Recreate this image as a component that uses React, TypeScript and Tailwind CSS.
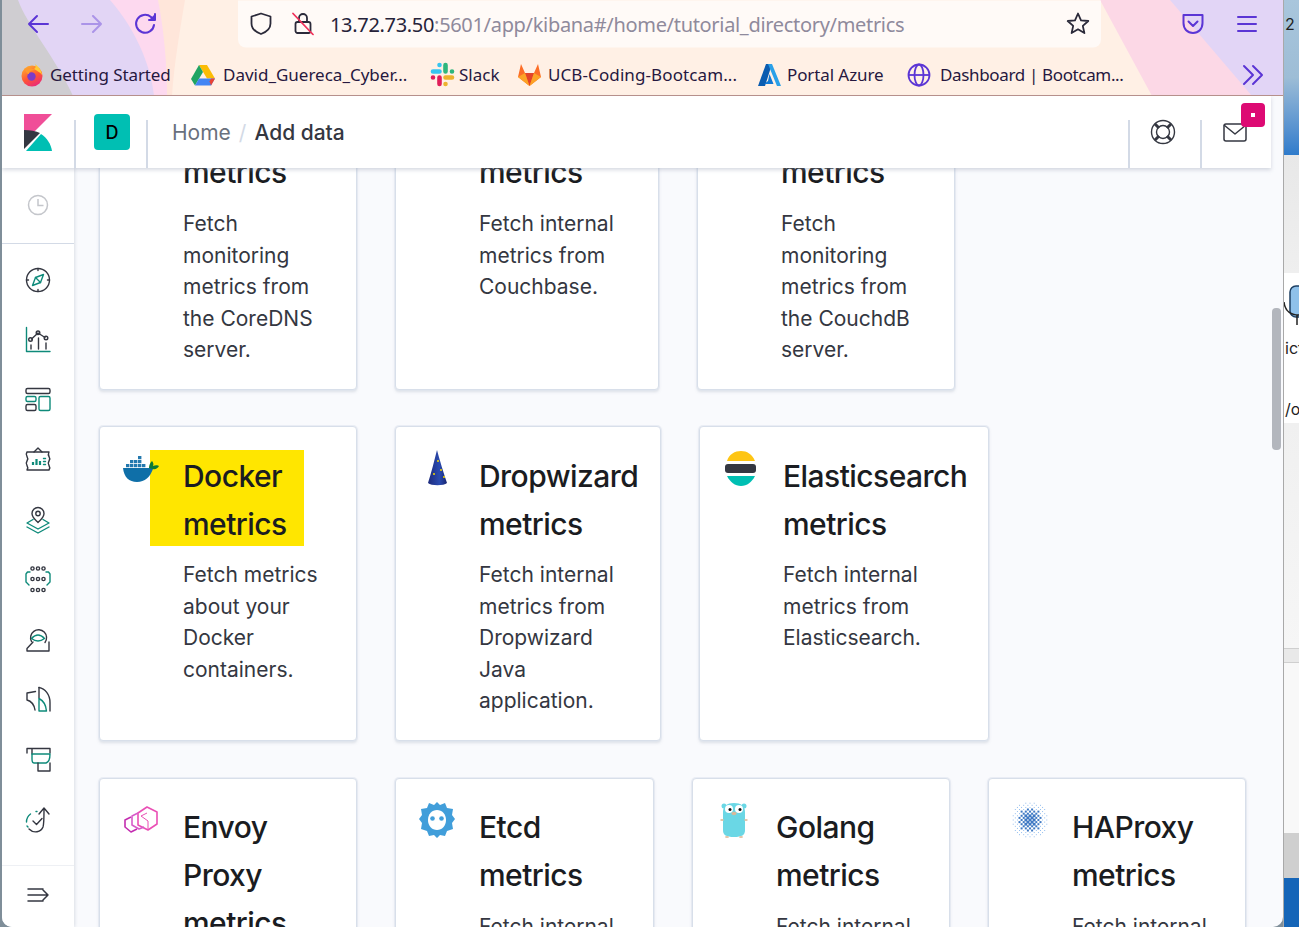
import React from "react";

const D = "#343741";
const T = "#0e8a7a";
const P = "#5b35d5";

function I({ children }: { children: React.ReactNode }) {
  return (
    <svg width="32" height="32" viewBox="0 0 32 32" fill="none" stroke={D} strokeWidth="1.4" strokeLinecap="round" strokeLinejoin="round">
      {children}
    </svg>
  );
}

const navIcons: React.ReactNode[] = [
  <I key="a">
    <circle cx="16" cy="16" r="11.5" />
    <path d="M16 4.5v2M16 25.5v2M4.5 16h2M25.5 16h2" />
    <path d="M21.5 10.5 18.5 18.5 10.5 21.5 13.5 13.5Z" stroke={T} />
    <path d="M13.5 13.5 18.5 18.5" stroke={T} />
  </I>,
  <I key="b">
    <path d="M4.5 3.5V27.5H28" stroke={T} />
    <path d="M9.5 15 16 9 23 13.5" />
    <circle cx="8.5" cy="15.5" r="1.8" />
    <circle cx="16" cy="8.8" r="1.8" />
    <circle cx="24" cy="14" r="1.8" />
    <path d="M9 21v4M16.500 14v11M24 19v6" />
  </I>,
  <I key="c">
    <rect x="4" y="4.500" width="24" height="5" rx="1.5" />
    <rect x="4" y="12.500" width="10" height="5" rx="1.5" stroke={T} />
    <rect x="4" y="20.500" width="10" height="6" rx="1.500" />
    <rect x="17" y="12.500" width="11" height="14" rx="1.500" stroke={T} />
  </I>,
  <I key="d">
    <path d="M12 8l4-4 4 4" />
    <path d="M5 8h22v0c-1 2-1 3 0 4.500s1 3 0 4.500-1 3 0 4.500 1 3 0 4.500H5c1-1.500 1-3 0-4.500s-1-3 0-4.500 1-3 0-4.500-1-3 0-4.500Z" />
    <path d="M11 21v-3M14.500 21v-6M18 21v-4" stroke={T} strokeWidth="2.200" strokeLinecap="butt" />
    <path d="M21.500 14.500h2M21.500 17.500h2M21.500 20.500h2" stroke={T} />
  </I>,
  <I key="e">
    <path d="M16 18.500c-3-3-6-5-6-9a6 6 0 0 1 12 0c0 4-3 6-6 9Z" />
    <circle cx="16" cy="9.500" r="2.200" />
    <path d="M11 15.500 5 19l11 6 11-6-6-3.500" stroke={T} />
    <path d="M5 23l11 6 11-6" stroke={T} />
  </I>,
  <I key="f">
    {[[10.5, 4.5], [16, 4.5], [21.5, 4.5], [10.5, 15], [16, 15], [21.5, 15], [10.5, 26], [16, 26], [21.5, 26]].map(([x, y], i) => (
      <circle key={i} cx={x} cy={y} r="1.600" />
    ))}
    <path d="M8 8H5.500L4 10v8l3 3" stroke={T} />
    <path d="M24 8h2.500l1.500 2v8l-3 3" stroke={T} />
  </I>,
  <I key="g">
    <path d="M9.500 17.500a8 8 0 1 1 13.500 1" />
    <path d="M9.500 14.500q6.500-7 13 0-6.500 5-13 0Z" stroke={T} />
    <path d="M11 18 5 24.500V27h22V18" />
  </I>,
  <I key="h">
    <path d="M13.500 7.500 5 9v7c4 1 7 4 8 10" />
    <path d="M17 3.500c6 1 11 7 11 15V27" />
    <path d="M17 3.500V14" />
    <path d="M17 14.500c4 2 7 7 7.500 12.500H17Z" stroke={T} />
  </I>,
  <I key="i">
    <path d="M5 9V4.500h23V9M10 4.500V10" />
    <path d="M10 10h18c0 5-1 8-4 9H12c-2 0-2-2-2-4Z" stroke={T} />
    <path d="M16 19v8h12v-8" />
  </I>,
  <I key="j">
    <path d="M4.500 18a10 10 0 0 1 4-8M14 7.500h1M5 22l1 1" stroke={T} />
    <path d="M7 25c5 5 12 3 14-2 1-3 1-9 1-17M17 10l5-6 5 6" />
    <path d="M11 17l3.500 3.500 5.500-6" />
  </I>,
];

function Firefox() {
  return (
    <svg width="24" height="24" viewBox="0 0 24 24">
      <defs>
        <linearGradient id="ff" x1="0.2" y1="0" x2="0.7" y2="1">
          <stop offset="0" stopColor="#ffb02e" />
          <stop offset=".55" stopColor="#ff5634" />
          <stop offset="1" stopColor="#e8287e" />
        </linearGradient>
      </defs>
      <circle cx="12" cy="13" r="10.500" fill="url(#ff)" />
      <path d="M15 1c4 3 7 7 7 11-2-3-5-4-8-6 2-1 2-3 1-5Z" fill="#ffcb35" />
      <circle cx="11.500" cy="13.500" r="4.200" fill="#7a3cc9" />
      <path d="M5 7c3-2 7-2 10 0 -3 0-6 1-6 4-2 0-3-2-4-4Z" fill="#ff9a2e" />
    </svg>
  );
}
function Drive() {
  return (
    <svg width="24" height="22" viewBox="0 0 24 22">
      <path d="M8 1h8l8 13.500h-8Z" fill="#fbbc04" />
      <path d="M8 1 0 15l4 6.500L12 8Z" fill="#1fa463" />
      <path d="M8 14.500h16L20 21.500H4Z" fill="#4285f4" />
      <path d="M24 14.500h-4l-1.500 3L20 21.500Z" fill="#ea4335" />
    </svg>
  );
}
function Slack() {
  return (
    <svg width="25" height="25" viewBox="0 0 25 25" fill="none" strokeWidth="4.600" strokeLinecap="round">
      <path d="M9.500 3v0M3 9.500h6.500" stroke="#36c5f0" />
      <path d="M22 9.500h0M15.500 3v6.500" stroke="#2eb67d" />
      <path d="M15.500 22h0M22 15.500h-6.500" stroke="#ecb22e" />
      <path d="M3 15.500h0M9.500 22v-6.500" stroke="#e01e5a" />
    </svg>
  );
}
function GitLab() {
  return (
    <svg width="25" height="24" viewBox="0 0 25 24">
      <path d="M12.500 23 1 14l3-13 4 9h9l4-9 3 13Z" fill="#fc6d26" />
      <path d="M12.500 23 8 10h9Z" fill="#e24329" />
      <path d="M12.500 23 1 14l7-4ZM12.500 23 24 14l-7-4Z" fill="#fca326" />
    </svg>
  );
}
function Azure() {
  return (
    <svg width="23" height="24" viewBox="0 0 23 24">
      <path d="M8 1h6L7 23H0Z" fill="#0a5cb0" />
      <path d="M14 1h-4l9 22h4Z" fill="#2aa0e8" />
      <path d="M11.500 11l4 10H6l4-3Z" fill="#0f78d4" />
    </svg>
  );
}
function Globe() {
  return (
    <svg width="24" height="24" viewBox="0 0 24 24" fill="none" stroke={P} strokeWidth="1.800">
      <circle cx="12" cy="12" r="10.500" />
      <ellipse cx="12" cy="12" rx="4.500" ry="10.500" />
      <path d="M1.500 12h21" />
    </svg>
  );
}

function Docker() {
  return (
    <svg width="36" height="36" viewBox="0 0 36 36">
      <path d="M0 18h26c1 0 2-1 3-2 1 1 1 2 1 3-3 8-8 13-16 13C6 32 1 27 0 18Z" fill="#0f6fa8" />
      <path d="M26 18c0-3 1-5 3-7 1 1 2 3 1 5 2-1 5-1 6 0-1 2-4 4-6 3Z" fill="#0f7a34" />
      {[[3, 14], [7, 14], [11, 14], [15, 14], [19, 14], [7, 10], [11, 10], [15, 10], [15, 6]].map(([x, y], i) => (
        <rect key={i} x={x} y={y} width="3.400" height="3.200" fill="#2378ae" />
      ))}
    </svg>
  );
}
function Dropwizard() {
  return (
    <svg width="36" height="36" viewBox="0 0 36 36">
      <defs>
        <linearGradient id="dw" x1="0" x2="1" y1="0" y2="0">
          <stop offset="0" stopColor="#1d2a7c" />
          <stop offset=".6" stopColor="#2a4bb0" />
          <stop offset="1" stopColor="#172470" />
        </linearGradient>
      </defs>
      <path d="M18 0c2 8 7 24 10 33-3 3-16 3-19 0C12 24 16 8 18 0Z" fill="url(#dw)" />
      <circle cx="19" cy="11" r="1" fill="#f5d800" />
      <circle cx="22" cy="20" r="1" fill="#f5d800" />
      <circle cx="15" cy="24" r="1" fill="#f5d800" />
      <circle cx="25" cy="27" r="1" fill="#f5d800" />
    </svg>
  );
}
function Elastic() {
  return (
    <svg width="36" height="36" viewBox="0 0 36 36">
      <path d="M4 11C6 4 12 1 18 1s11 3 14 10Z" fill="#fec514" />
      <rect x="2" y="14" width="31" height="9" rx="3" fill={D} />
      <path d="M4 26h28c-3 6-8 10-14 10S7 32 4 26Z" fill="#00bfb3" />
    </svg>
  );
}
function Envoy() {
  return (
    <svg width="36" height="36" viewBox="0 0 36 36" fill="none" strokeWidth="1.600" strokeLinejoin="round">
      <path d="M24 5l10 5v12l-9 6-10-5V11Z" stroke="#ea4fb5" />
      <path d="M24 11l-6 3 7 5v8" stroke="#ea4fb5" strokeWidth="1" />
      <path d="M15 11l-6 3v9l7 4 5-2" stroke="#d75bc9" />
      <path d="M8 15l-6 3v7l6 5 6-3" stroke="#c32db0" />
    </svg>
  );
}
function Etcd() {
  return (
    <svg width="36" height="36" viewBox="0 0 36 36">
      <path d="M18 0l3 3 5-2 2 5 6 1-1 6 3 4-3 4 1 6-6 2-2 5-5-1-3 3-3-3-5 1-2-5-6-2 1-6-3-4 3-4-1-6 6-1 2-5 5 2Z" fill="#419eda" />
      <path d="M18 8c5 0 9 4 9 10 0 6-4 10-9 10S9 24 9 18 13 8 18 8Z" fill="#fff" />
      <circle cx="13.500" cy="16.500" r="2.300" fill="#419eda" />
      <circle cx="22.500" cy="16.500" r="2.300" fill="#419eda" />
    </svg>
  );
}
function Gopher() {
  return (
    <svg width="36" height="36" viewBox="0 0 36 36">
      <circle cx="8" cy="4" r="2.500" fill="#6ad7e5" />
      <circle cx="28" cy="4" r="2.500" fill="#6ad7e5" />
      <path d="M18 1c7 0 11 3 11 9v18c0 5-3 7-11 7S7 33 7 28V10C7 4 11 1 18 1Z" fill="#6ad7e5" />
      <circle cx="13" cy="7" r="4" fill="#fff" />
      <circle cx="23" cy="7" r="4" fill="#fff" />
      <circle cx="14" cy="7.500" r="1.500" fill="#111" />
      <circle cx="24" cy="7.500" r="1.500" fill="#111" />
      <ellipse cx="18" cy="11.500" rx="2.500" ry="1.800" fill="#d8b89a" />
      <ellipse cx="6" cy="18" rx="1.800" ry="1" fill="#e0c3a5" />
      <ellipse cx="30" cy="18" rx="1.800" ry="1" fill="#e0c3a5" />
      <ellipse cx="11" cy="35" rx="2" ry="1" fill="#e0c3a5" />
      <ellipse cx="25" cy="35" rx="2" ry="1" fill="#e0c3a5" />
    </svg>
  );
}
function HAProxy() {
  const cells: React.ReactNode[] = [];
  for (let y = -8; y <= 8; y++) {
    for (let x = -8; x <= 8; x++) {
      const d = Math.hypot(x, y);
      if (d > 8.700 || (x + y) % 2 !== 0) continue;
      const s = d < 3 ? 2.800 : d < 5.700 ? 2 : 0.900;
      cells.push(
        <rect key={x + "_" + y} x={18 + x * 2.100 - s / 2} y={18 + y * 2.100 - s / 2} width={s} height={s} fill={d < 5.700 ? "#3f79c4" : "#7cb0ea"} />
      );
    }
  }
  return <svg width="36" height="36" viewBox="0 0 36 36">{cells}</svg>;
}

type Card = { w: string; title: string[]; desc: string[]; icon?: React.ReactNode; hl?: boolean };

function CardView({ c, first }: { c: Card; first: boolean }) {
  return (
    <div className={`${c.w} flex-none flex rounded-[4px] border border-[#d8dfea] bg-white pl-[23px] pt-[23px] pb-[23px] shadow-[0_0_0_1px_rgba(225,230,240,0.6),0_2px_3px_rgba(152,162,179,0.3)]`}>
      <div className="relative z-10 h-9 w-9 flex-none">{c.icon}</div>
      <div className="ml-6 pt-[2px]">
        <div
          className={
            c.hl
              ? "-mt-[2px] -ml-[33px] mb-[13px] h-[96px] w-[154px] bg-[#ffe600] pl-[33px] pt-[1.500px]"
              : first
                ? "mb-[12px]"
                : "-mt-[0.5px] mb-[11.5px]"
          }
        >
          {c.title.map((t) => (
            <div key={t} className="whitespace-nowrap text-[30px] font-[450] leading-[48px] tracking-[-0.55px] text-[#1a1c21]">{t}</div>
          ))}
        </div>
        {c.desc.map((t) => (
          <div key={t} className="whitespace-nowrap text-[21px] leading-[31.5px] text-[#343741]">{t}</div>
        ))}
      </div>
    </div>
  );
}

const rows: Card[][] = [
  [
    { w: "w-[258px]", title: ["CoreDNS", "metrics"], desc: ["Fetch", "monitoring", "metrics from", "the CoreDNS", "server."] },
    { w: "w-[264px]", title: ["Couchbase", "metrics"], desc: ["Fetch internal", "metrics from", "Couchbase."] },
    { w: "w-[258px]", title: ["CouchDB", "metrics"], desc: ["Fetch", "monitoring", "metrics from", "the CouchdB", "server."] },
  ],
  [
    { w: "w-[258px]", icon: <Docker />, hl: true, title: ["Docker", "metrics"], desc: ["Fetch metrics", "about your", "Docker", "containers."] },
    { w: "w-[266px]", icon: <Dropwizard />, title: ["Dropwizard", "metrics"], desc: ["Fetch internal", "metrics from", "Dropwizard", "Java", "application."] },
    { w: "w-[290px]", icon: <Elastic />, title: ["Elasticsearch", "metrics"], desc: ["Fetch internal", "metrics from", "Elasticsearch."] },
  ],
  [
    { w: "w-[258px]", icon: <Envoy />, title: ["Envoy", "Proxy", "metrics"], desc: ["Fetch internal"] },
    { w: "w-[259px]", icon: <Etcd />, title: ["Etcd", "metrics"], desc: ["Fetch internal", "metrics from"] },
    { w: "w-[258px]", icon: <Gopher />, title: ["Golang", "metrics"], desc: ["Fetch internal", "metrics from"] },
    { w: "w-[258px]", icon: <HAProxy />, title: ["HAProxy", "metrics"], desc: ["Fetch internal", "metrics from"] },
  ],
];

const bookmarks: { icon: React.ReactNode; label: string; w: string; iw: string; t: string }[] = [
  { icon: <Firefox />, label: "Getting Started", w: "w-[121px]", iw: "w-[30px]", t: "tracking-[-0.1px]" },
  { icon: <Drive />, label: "David_Guereca_Cyber...", w: "w-[185px]", iw: "w-[32px]", t: "" },
  { icon: <Slack />, label: "Slack", w: "w-[40px]", iw: "w-[29px]", t: "" },
  { icon: <GitLab />, label: "UCB-Coding-Bootcam...", w: "w-[190px]", iw: "w-[31px]", t: "tracking-[0.1px]" },
  { icon: <Azure />, label: "Portal Azure", w: "w-[97px]", iw: "w-[29px]", t: "tracking-[-0.1px]" },
  { icon: <Globe />, label: "Dashboard | Bootcam...", w: "w-[186px]", iw: "w-[33px]", t: "tracking-[-0.35px]" },
];
const bmGaps = ["mr-[20px]", "mr-[22px]", "mr-[18px]", "mr-[20px]", "mr-[23px]", ""];

function Sep() {
  return <div className="h-[48px] w-[2px] flex-none self-end bg-[#d3dae6]" />;
}

export default function App() {
  return (
    <div className="flex h-[927px] w-[1299px] overflow-hidden bg-[#7f8e99] font-['Inter',sans-serif]">
      <div className="w-[2px] flex-none bg-[#7f8e99]" />
      <div className="flex w-[1281px] flex-none flex-col overflow-hidden rounded-b-[10px] bg-[#f9fafd]">
        {/* browser chrome */}
        <div className="relative h-[96px] flex-none overflow-hidden border-b border-[#b7908a] bg-[#fff0e5] font-['Noto_Sans',sans-serif]">
          <svg className="absolute inset-0" width="1281" height="96" viewBox="0 0 1281 96" preserveAspectRatio="none">
            <path d="M0 0H183C178 30 172 65 170 96H0Z" fill="#ffe6da" />
            <path d="M0 0H156C162 30 165 65 165 96H0Z" fill="#fdd9ef" />
            <path d="M0 0H108C130 25 148 60 152 96H0Z" fill="#e2d5f5" />
            <path d="M0 0H16C25 25 55 60 71 96H0Z" fill="#cfcdd1" />
            <path d="M1098 0H1281V96H1150Z" fill="#fcd8e6" />
            <path d="M1168 0H1281V96H1250Z" fill="#e2d5f6" />
          </svg>
          <div className="relative flex h-[48px] items-center">
            <svg className="ml-[24px]" width="24" height="24" viewBox="0 0 24 24" fill="none" stroke={P} strokeWidth="2" strokeLinecap="round" strokeLinejoin="round"><path d="M22 12H3M11 4l-8 8 8 8" /></svg>
            <svg className="ml-[30px] opacity-40" width="24" height="24" viewBox="0 0 24 24" fill="none" stroke={P} strokeWidth="2" strokeLinecap="round" strokeLinejoin="round"><path d="M2 12h19M13 4l8 8-8 8" /></svg>
            <svg className="ml-[30px]" width="24" height="24" viewBox="0 0 24 24" fill="none" stroke={P} strokeWidth="2" strokeLinecap="round" strokeLinejoin="round"><path d="M20 13a9 9 0 1 1-3-8l3 3" /><path d="M21 2v6h-6" fill={P} /></svg>
            <div className="ml-[80px] flex h-[47px] w-[863px] -translate-y-[0.5px] items-center rounded-b-[8px] bg-[#fffaf7]">
              <svg className="ml-[11px]" width="24" height="24" viewBox="0 0 24 24" fill="none" stroke="#2b2a3a" strokeWidth="1.800" strokeLinejoin="round"><path d="M12 2l9.500 3v7c0 5-4 8.500-9.500 10.500C6.500 20.500 2.500 17 2.500 12V5Z" /></svg>
              <svg className="ml-[18px]" width="24" height="24" viewBox="0 0 24 24" fill="none" stroke="#2b2a3a" strokeWidth="1.800" strokeLinecap="round"><rect x="4.500" y="10.500" width="15" height="11" rx="2" /><path d="M8 10.500V6.500a4 4 0 0 1 8 0v4" /><path d="M2 2l20 21" stroke="#f0305a" /></svg>
              <div className="ml-[15px] mt-[2px] whitespace-nowrap text-[20px] leading-[28px] tracking-[-0.32px] text-[#8f8a9c]">
                <span className="text-[#26233a]">13.72.73.50</span>:5601/app/kibana#/home/tutorial_directory/metrics
              </div>
              <div className="flex-1" />
              <svg className="mr-[11px]" width="24" height="24" viewBox="0 0 24 24" fill="none" stroke="#2b2a3a" strokeWidth="1.800" strokeLinejoin="round"><path d="M12 2l3 6.800 7.300.7-5.500 4.900 1.600 7.200L12 17.800 5.600 21.600l1.600-7.200L1.700 9.500 9 8.800Z" /></svg>
            </div>
            <svg className="ml-[80px]" width="24" height="24" viewBox="0 0 24 24" fill="none" stroke={P} strokeWidth="2" strokeLinecap="round" strokeLinejoin="round"><path d="M2.500 3h19v8c0 6-4 10-9.500 10S2.500 17 2.500 11Z" /><path d="M7.500 9.500 12 14l4.500-4.500" /></svg>
            <svg className="ml-[30px]" width="24" height="24" viewBox="0 0 24 24" fill="none" stroke={P} strokeWidth="2" strokeLinecap="round"><path d="M3 5h18M3 12h18M3 19h18" /></svg>
          </div>
          <div className="relative mt-[3px] flex h-[47px] -translate-y-[3px] items-center pl-[18px] pt-[6px] text-[17px] text-[#26183f]">
            {bookmarks.map((b, i) => (
              <div key={b.label} className={`flex flex-none items-center ${bmGaps[i]}`}>
                <div className={`flex ${b.iw} flex-none items-center`}>{b.icon}</div>
                <div className={`${b.w} ${b.t} whitespace-nowrap`}>{b.label}</div>
              </div>
            ))}
            <div className="flex-1" />
            <svg className="mr-[18px]" width="24" height="24" viewBox="0 0 24 24" fill="none" stroke={P} strokeWidth="2" strokeLinecap="round" strokeLinejoin="round"><path d="M3 3l9 9-9 9M12 3l9 9-9 9" /></svg>
          </div>
        </div>

        {/* kibana header */}
        <div className="relative z-20 flex h-[72px] w-[1269px] flex-none items-center bg-white shadow-[0_2px_4px_rgba(152,162,179,0.4)]">
          <div className="flex w-[72px] flex-none items-center justify-center">
            <svg width="28" height="37" viewBox="0 0 28 37">
              <path d="M0 0h28L0 28Z" fill="#f04e98" />
              <path d="M0 16c6 0 12 1 16 3L0 35Z" fill={D} />
              <path d="M2 37 17 20c6 4 10 10 11 17Z" fill="#00bfb3" />
            </svg>
          </div>
          <Sep />
          <div className="flex w-[70px] flex-none items-center pl-[18px]">
            <div className="flex h-9 w-9 items-center justify-center rounded-[4px] bg-[#00bfb3] text-[18px] font-medium text-black">D</div>
          </div>
          <Sep />
          <div className="ml-[24px] flex flex-1 items-center pt-[2px] text-[21px]">
            <span className="text-[#69707d]">Home</span>
            <span className="mx-[8px] text-[#d3dae6]">/</span>
            <span className="font-medium text-[#343741]">Add data</span>
          </div>
          <Sep />
          <div className="flex w-[70px] flex-none items-center justify-center pr-[4px]">
            <svg width="26" height="26" viewBox="0 0 26 26" fill="none" stroke={D} strokeWidth="1.400">
              <circle cx="13" cy="13" r="11.500" />
              <circle cx="13" cy="13" r="6.500" />
              <path d="M5 5l4 4M21 5l-4 4M5 21l4-4M21 21l-4-4" strokeWidth="3" />
            </svg>
          </div>
          <Sep />
          <div className="relative flex h-full w-[69px] flex-none items-center justify-center pr-[3px]">
            <svg width="24" height="19" viewBox="0 0 24 19" fill="none" stroke={D} strokeWidth="1.500" strokeLinejoin="round"><rect x="1" y="1" width="22" height="17" rx="2" /><path d="M1 2l11 9L23 2" /></svg>
            <div className="absolute left-[39px] top-[7px] flex h-6 w-6 items-center justify-center rounded-[4px] bg-[#dd0a73]">
              <div className="h-1 w-1 bg-white" />
            </div>
          </div>
        </div>

        {/* body */}
        <div className="relative flex min-h-0 flex-1">
          <div className="z-10 flex w-[72px] flex-none flex-col bg-white shadow-[1px_0_3px_rgba(152,162,179,0.3)]">
            <div className="flex h-[76px] flex-none items-center justify-center border-b border-[#d3dae6] pb-[2px]">
              <svg width="22" height="22" viewBox="0 0 22 22" fill="none" stroke="#c4c6cb" strokeWidth="1.500"><circle cx="11" cy="11" r="9.500" /><path d="M11 5v6.500h5.500" /></svg>
            </div>
            <div className="mt-[6px] flex flex-col">
              {navIcons.map((n, i) => (
                <div key={i} className="flex h-[60px] items-center justify-center">{n}</div>
              ))}
            </div>
            <div className="flex-1" />
            <div className="flex h-[62px] flex-none items-center justify-center border-t border-[#eef0f4] pb-[3px]">
              <svg width="24" height="18" viewBox="0 0 24 18" fill="none" stroke={D} strokeWidth="1.500" strokeLinecap="round" strokeLinejoin="round"><path d="M2 3h15M2 9h20M2 15h15M17 4l5 5-5 5" /></svg>
            </div>
          </div>
          <div className="min-w-0 flex-1 overflow-hidden">
            <div className="-mt-[94px] flex flex-col pl-[25px]">
              {rows.map((r, i) => (
                <div key={i} className={`flex items-stretch gap-[38px] ${i === 1 ? "mt-[36.5px]" : i === 2 ? "mt-[37px]" : ""}`}>
                  {r.map((c) => (
                    <CardView key={c.title[0]} c={c} first={i === 0} />
                  ))}
                </div>
              ))}
            </div>
          </div>
          <div className="absolute right-[2px] top-[140px] h-[142px] w-[9px] rounded-[4px] bg-[#b3b6bd]" />
        </div>
      </div>

      {/* desktop behind */}
      <div className="flex w-[16px] flex-none flex-col overflow-hidden border-l border-[#a9a9a9] text-[16px] leading-5 text-[#222]">
        <div className="h-[155px] flex-none bg-gradient-to-b from-[#a9c6dc] via-[#9dbdd6] to-[#2e7bcb] pl-[1px] pt-[14px]">2</div>
        <div className="h-[118px] flex-none bg-gradient-to-b from-[#e8e8e8] to-[#efefef]" />
        <div className="flex h-[150px] flex-none flex-col bg-white">
          <svg className="mt-[12px] flex-none" width="15" height="40" viewBox="0 0 15 40" fill="none">
            <rect x="6" y="1" width="14" height="31" rx="6" fill="#8fc1ea" stroke="#1d3f63" strokeWidth="1.500" />
            <path d="M0 17c1 9 7 13 15 13M13 30v10" stroke="#222" strokeWidth="1.500" />
          </svg>
          <div className="mt-[13px] pl-[1px]">ict</div>
          <div className="mt-[41px] pl-[1px]">/oi</div>
        </div>
        <div className="h-[225px] flex-none bg-gradient-to-b from-[#f0f0f0] to-[#f6f6f6]" />
        <div className="h-[15px] flex-none border-y border-[#cfcfcf] bg-[#e9e9e9]" />
        <div className="h-[170px] flex-none bg-[#f8f8f8]" />
        <div className="h-[45px] flex-none bg-[#cfcfcf]" />
        <div className="flex-1 bg-[#1565b8]" />
      </div>
    </div>
  );
}
